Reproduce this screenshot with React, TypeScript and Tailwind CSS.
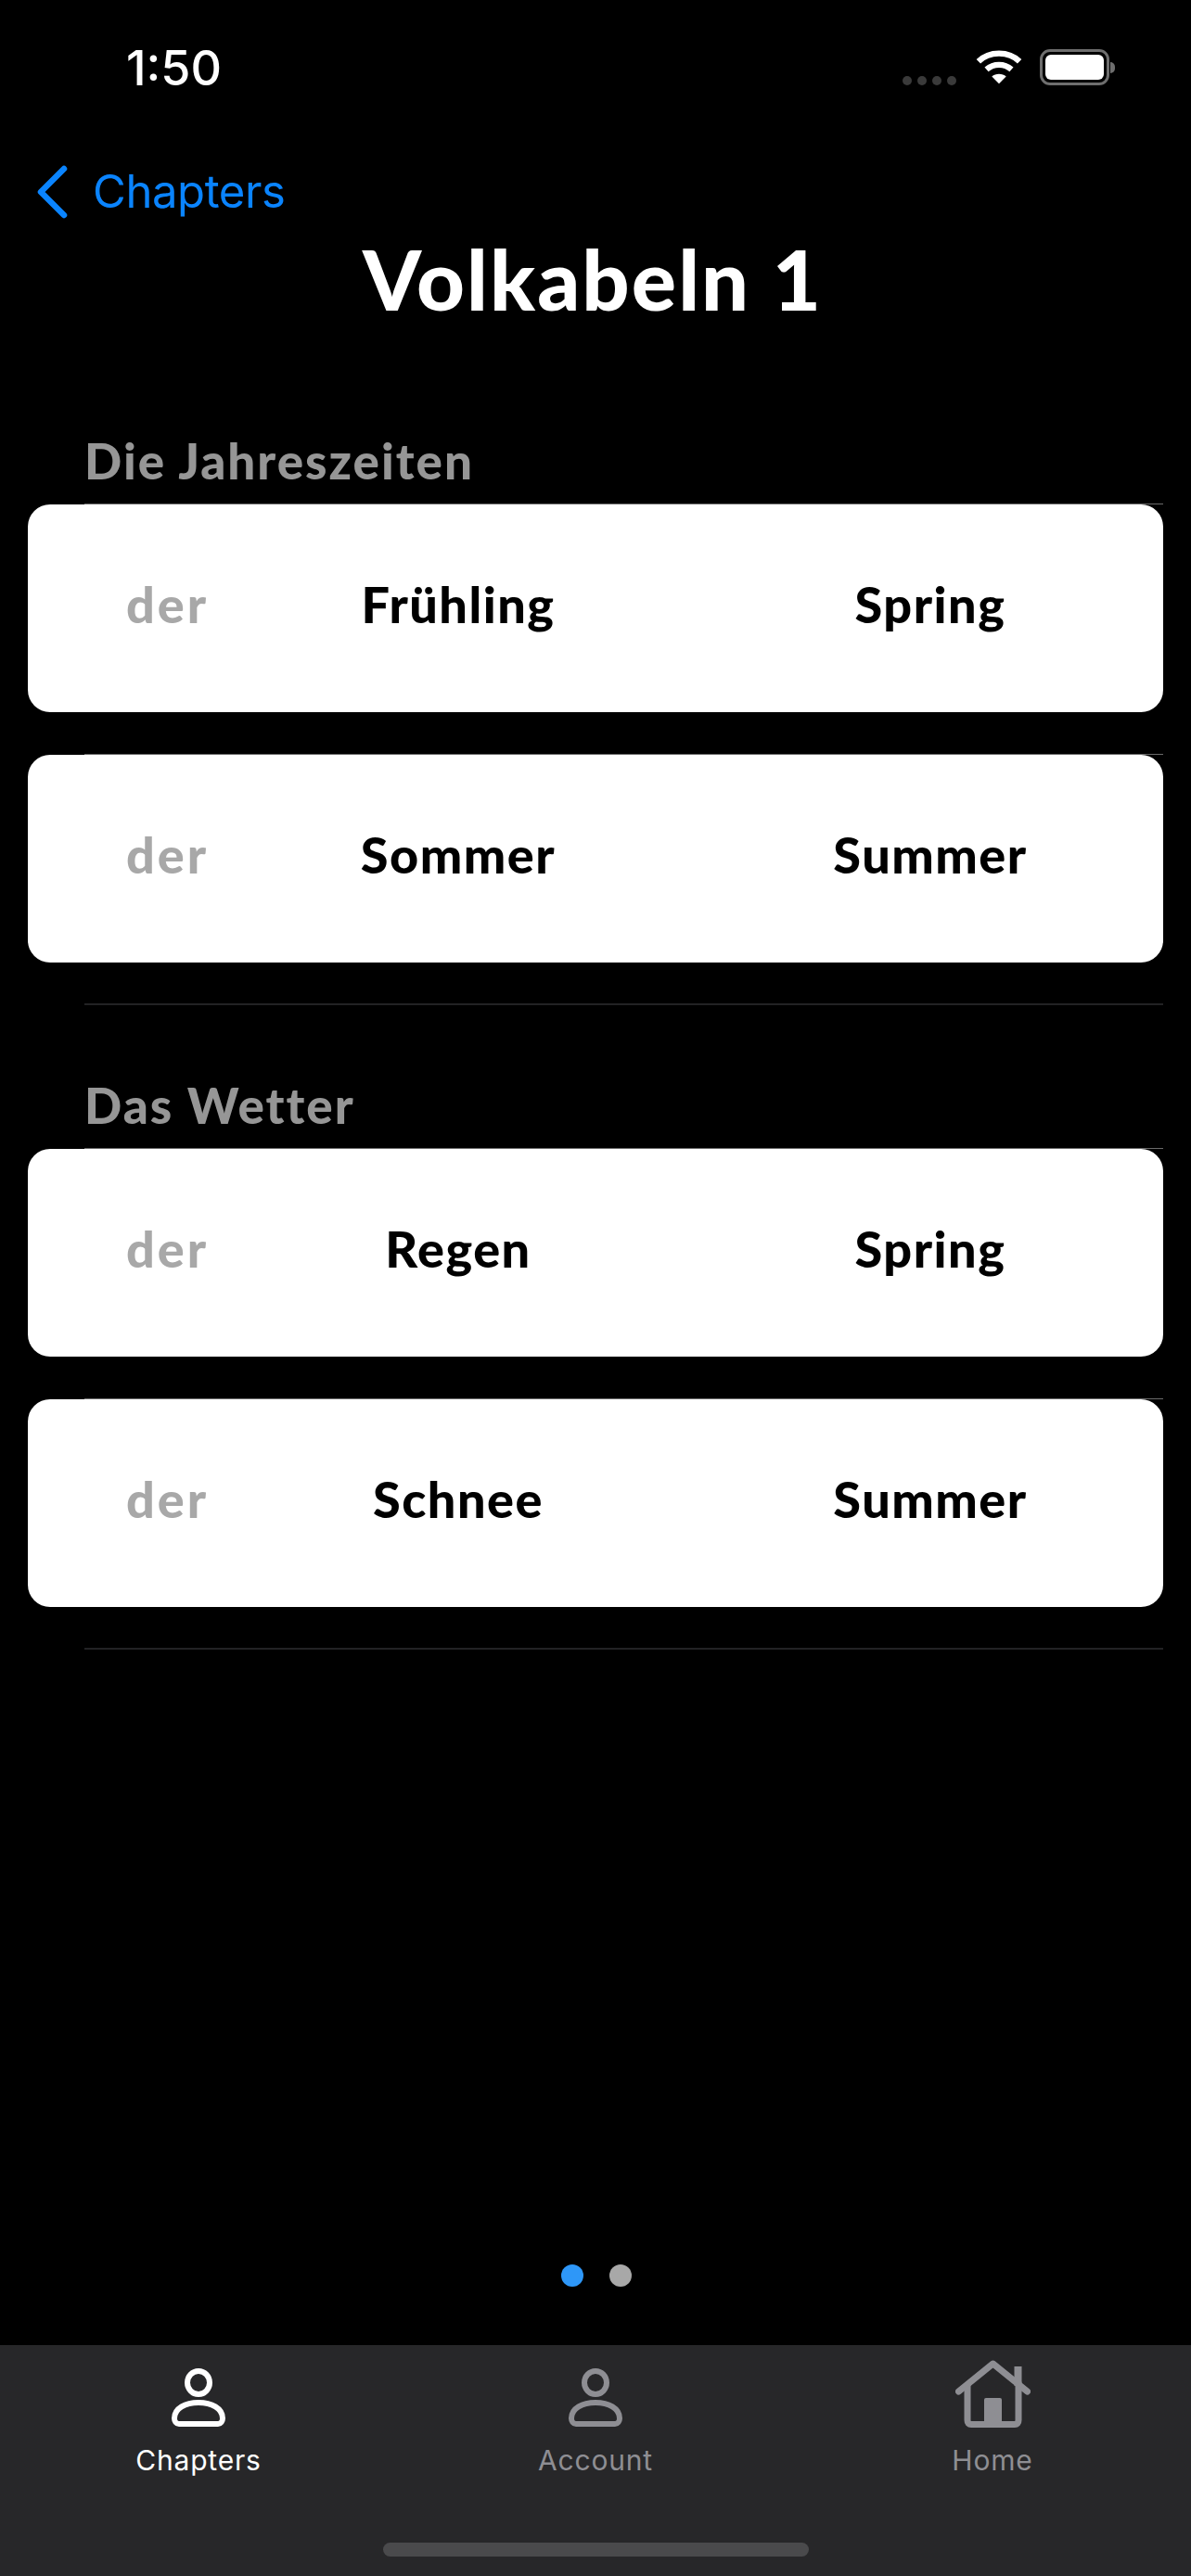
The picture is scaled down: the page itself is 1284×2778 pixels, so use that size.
const sans = "font-['Lato','Noto_Sans',sans-serif]";

function Card({ word, en }: { word: string; en: string }) {
  return (
    <div className="relative flex h-[224px] items-center rounded-[24px] bg-white pb-[9px] text-[54px] font-black leading-none tracking-[1.5px]">
      <div className="absolute left-[61px] right-0 top-[-1px] h-px bg-[#6a6a6a]" />
      <div className="w-[150px] pl-[106px] whitespace-nowrap tracking-[3px] text-[#a8a8a8]">der</div>
      <div className="ml-[164px] w-[300px] text-center text-black">{word}</div>
      <div className="ml-[209px] w-[300px] text-center text-black">{en}</div>
    </div>
  );
}

function Section({ title, rows }: { title: string; rows: [string, string][] }) {
  return (
    <section>
      <div className="h-[77px] pl-[91px] text-[53px] font-black leading-[60px] tracking-[2px] text-[#969696]">{title}</div>
      <div className="flex flex-col gap-[46px] px-[30px]">
        {rows.map(([w, e]) => (
          <Card key={w} word={w} en={e} />
        ))}
      </div>
      <div className="ml-[91px] mr-[30px] mt-[44px] h-[2px] bg-[#222224]" />
    </section>
  );
}

function Person({ color }: { color: string }) {
  return (
    <svg width="62" height="64" viewBox="0 0 62 64" fill="none" stroke={color} strokeWidth="6">
      <ellipse cx="31" cy="15.5" rx="12" ry="12.5" />
      <path d="M5 54c0-11 12-17 26-17s26 6 26 17c0 3-2 6-5 6H10c-3 0-5-3-5-6z" strokeLinejoin="round" />
    </svg>
  );
}

function HomeIcon() {
  return (
    <svg width="81" height="73" viewBox="0 0 81 73" fill="none" stroke="#8e8e93" strokeWidth="7" strokeLinecap="round" strokeLinejoin="round">
      <path d="M3.5 34 40.5 4l37 30" />
      <path d="M13 27v38c0 3 1.500 4.500 4 4.500h47c2.500 0 4-1.500 4-4.500V25" />
      <path d="M67.500 24V11" strokeWidth="8" strokeLinecap="square" />
      <rect x="31" y="41" width="19" height="28" rx="2" fill="#8e8e93" stroke="none" />
    </svg>
  );
}

function Tab({ label, active, children }: { label: string; active?: boolean; children: React.ReactNode }) {
  return (
    <div className="flex w-[428px] flex-col items-center">
      <div className="flex h-[80px] items-end">{children}</div>
      <div className={`mt-[17px] text-[30px] leading-[36px] tracking-[0.8px] font-['Inter',sans-serif] ${active ? "text-white" : "text-[#8e8e93]"}`}>{label}</div>
    </div>
  );
}

export default function App() {
  return (
    <div className={`flex h-[2778px] w-[1284px] flex-col bg-black text-white ${sans}`}>
      <div className="flex h-[176px] items-start justify-between pl-[136px] pr-[82px] pt-[44px]">
        <div className="mt-[2px] font-['Inter',sans-serif] text-[52px] font-medium leading-[56px]">1:50</div>
        <div className="mt-[9px] flex items-center gap-[19px]">
          <div className="mr-[2px] mt-[28px] flex gap-[6px]">
            <span className="h-[10px] w-[10px] rounded-full bg-[#3a3a3a]" />
            <span className="h-[10px] w-[10px] rounded-full bg-[#3a3a3a]" />
            <span className="h-[10px] w-[10px] rounded-full bg-[#3a3a3a]" />
            <span className="h-[10px] w-[10px] rounded-full bg-[#3a3a3a]" />
          </div>
          <svg width="50" height="38" viewBox="0 0 52 38" fill="none" stroke="white" strokeWidth="6.5">
            <path d="M3 12C15 0 37 0 49 12" />
            <path d="M12 21c8-7 20-7 28 0" />
            <path d="M26 37l-8-8c4-4 12-4 16 0z" fill="white" stroke="none" />
          </svg>
          <div className="flex items-center">
            <div className="h-[39px] w-[75px] rounded-[11px] border-[3px] border-[#6e6e6e] bg-black p-[3px]">
              <div className="h-full w-full rounded-[6px] bg-white" />
            </div>
            <div className="ml-[1px] h-[12px] w-[5px] rounded-r-full bg-[#6e6e6e]" />
          </div>
        </div>
      </div>

      <div className="flex h-[62px] items-center pl-[38px]">
        <svg width="36" height="58" viewBox="0 0 36 58" fill="none" stroke="#0a84ff" strokeWidth="6.5" strokeLinecap="round" strokeLinejoin="round">
          <path d="M31 4 6 29l25 25" />
        </svg>
        <span className="ml-[26px] font-['Inter',sans-serif] text-[49px] leading-[60px] tracking-[-0.4px] text-[#0a84ff]">Chapters</span>
      </div>

      <h1 className="mt-[18px] h-[88px] w-[1278px] text-center text-[90px] font-black leading-[88px] tracking-[2.1px]">Volkabeln 1</h1>

      <div className="mt-[123px]">
        <Section title="Die Jahreszeiten" rows={[["Frühling", "Spring"], ["Sommer", "Summer"]]} />
      </div>
      <div className="mt-[78px]">
        <Section title="Das Wetter" rows={[["Regen", "Spring"], ["Schnee", "Summer"]]} />
      </div>

      <div className="flex-1" />

      <div className="mb-[63px] flex justify-center gap-[28px] pl-[2px]">
        <span className="h-[24px] w-[24px] rounded-full bg-[#2e97f8]" />
        <span className="h-[24px] w-[24px] rounded-full bg-[#a8a8a8]" />
      </div>

      <div className="h-[249px] bg-[#272729]">
        <div className="flex pt-[9px]">
          <Tab label="Chapters" active><Person color="white" /></Tab>
          <Tab label="Account"><Person color="#8e8e93" /></Tab>
          <Tab label="Home"><HomeIcon /></Tab>
        </div>
        <div className="mx-auto mt-[71px] h-[15px] w-[459px] rounded-full bg-[#4a4a4c]" />
      </div>
    </div>
  );
}
